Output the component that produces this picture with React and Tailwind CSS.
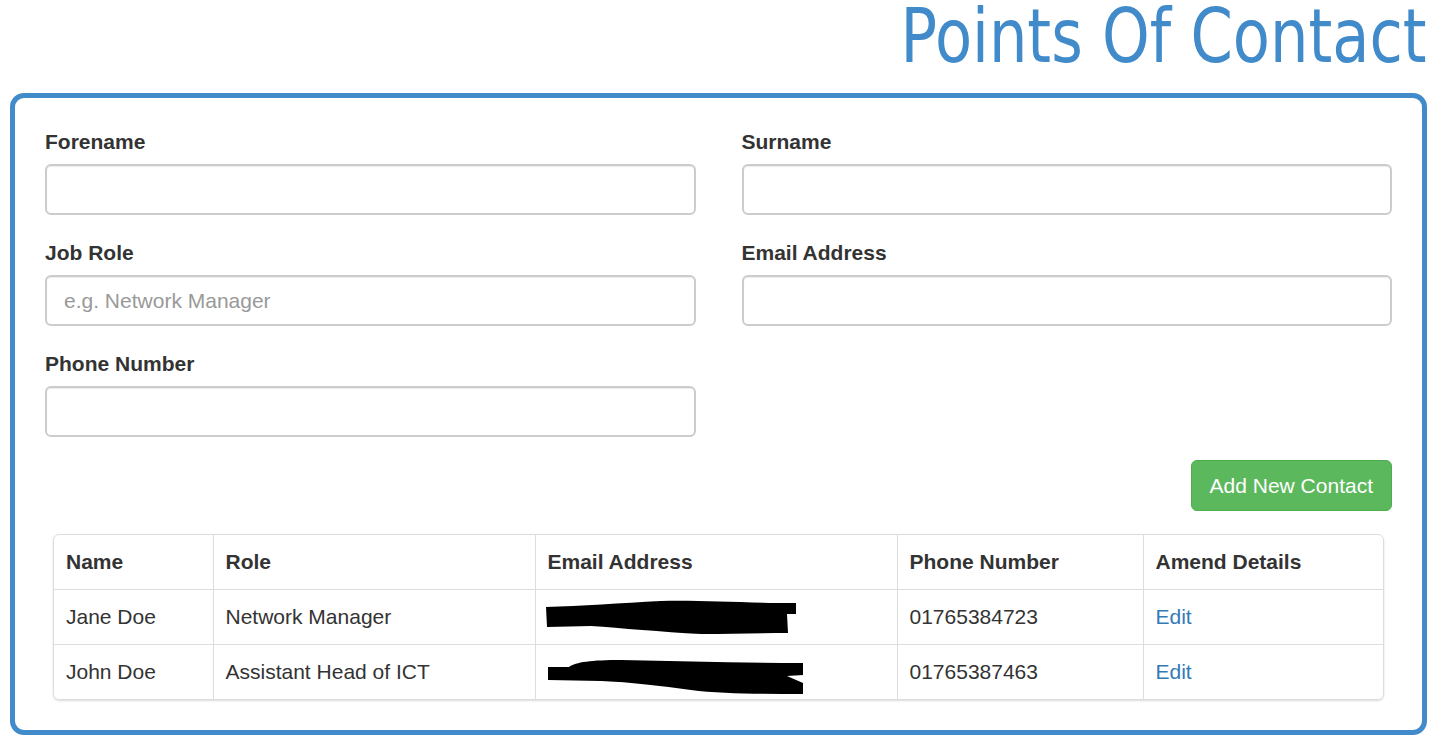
import React from "react";

const fields = [
	{ label: "Forename", placeholder: "" },
	{ label: "Surname", placeholder: "" },
	{ label: "Job Role", placeholder: "e.g. Network Manager" },
	{ label: "Email Address", placeholder: "" },
	{ label: "Phone Number", placeholder: "" },
];

const contacts = [
	{ name: "Jane Doe", role: "Network Manager", phone: "01765384723", scribble: 1 },
	{ name: "John Doe", role: "Assistant Head of ICT", phone: "01765387463", scribble: 2 },
];

// redacted email, drawn as a marker scribble
const Scribble = ({ variant }) => {
	if (variant === 1) {
		return (
			<svg width="270" height="45" viewBox="540 595 270 45" className="block -ml-[7px] -mt-[7px] -mb-[8px]">
				<path
					d="M545,607 C580,606 620,603 660,601 C700,600 740,603 795,603 L795,614 L786,614 L787,633 C760,633 730,634 700,634 C660,632 620,628 590,626 L546,627 Z"
					fill="#000"
				/>
			</svg>
		);
	}
	return (
		<svg width="270" height="48" viewBox="540 652 270 48" className="block -ml-[7px] -mt-[5px] -mb-[13px]">
			<path
				d="M547,667 L568,667 C575,662 590,660 620,660 C680,661 740,663 802,663 L802,675 L786,676 L802,683 L802,694 C760,694 720,694 690,690 C660,686 630,682 600,681 L547,680 Z"
				fill="#000"
			/>
		</svg>
	);
};

const Field = ({ label, placeholder }) => (
	<div className="mb-[23px]">
		<label className="block font-bold leading-[30px] mb-[7px] text-[#333]">{label}</label>
		<input
			type="text"
			placeholder={placeholder}
			className="block w-full h-[51px] px-[17px] border-2 border-[#ccc] rounded-[6px] shadow-[inset_0_1px_1px_rgba(0,0,0,0.075)] text-[#555] placeholder:text-[#999] outline-none"
		/>
	</div>
);

const App = () => {
	return (
		<div className="bg-white min-h-[743px] text-[21px] text-[#333]" style={{ fontFamily: '"Liberation Sans", Arial, sans-serif' }}>
			{/* Header */}
			<div className="flex justify-end pr-[5px] h-[93px]">
				<h1
					className="text-[74px] leading-[72px] h-[72px] font-normal text-[#428bca] whitespace-nowrap origin-right scale-x-82 scale-y-100"
					style={{ fontFamily: '"DejaVu Sans", sans-serif' }}
				>
					Points Of Contact
				</h1>
			</div>

			{/* Panel */}
			<div className="ml-[10px] w-[1417px] border-[5px] border-[#428bca] rounded-[14px] px-[30px] pt-[29px] pb-[30px]">
				<div className="grid grid-cols-2 gap-x-[46px]">
					{fields.map((f) => (
						<Field key={f.label} label={f.label} placeholder={f.placeholder} />
					))}
				</div>

				<div className="flex justify-end">
					<button className="h-[51px] px-[18px] bg-[#5cb85c] border border-[#4cae4c] rounded-[6px] text-white leading-[30px]">
						Add New Contact
					</button>
				</div>

				<div className="mt-[23px] mx-[8px] border border-[#ddd] rounded-[6px] shadow-[0_1px_2px_rgba(0,0,0,0.15)] overflow-hidden">
					<table className="w-full table-fixed border-collapse">
						<thead>
							<tr>
								<th className="w-[159px] text-left font-bold px-[12px] py-[12px] leading-[30px]">Name</th>
								<th className="w-[322px] text-left font-bold px-[12px] py-[12px] leading-[30px] border-l border-[#ddd]">Role</th>
								<th className="w-[362px] text-left font-bold px-[12px] py-[12px] leading-[30px] border-l border-[#ddd]">Email Address</th>
								<th className="w-[246px] text-left font-bold px-[12px] py-[12px] leading-[30px] border-l border-[#ddd]">Phone Number</th>
								<th className="text-left font-bold px-[12px] py-[12px] leading-[30px] border-l border-[#ddd]">Amend Details</th>
							</tr>
						</thead>
						<tbody>
							{contacts.map((c) => (
								<tr key={c.name} className="border-t border-[#ddd]">
									<td className="px-[12px] py-[12px] leading-[30px]">{c.name}</td>
									<td className="px-[12px] py-[12px] leading-[30px] border-l border-[#ddd]">{c.role}</td>
									<td className="px-[12px] py-[12px] leading-[30px] border-l border-[#ddd] overflow-visible">
										<Scribble variant={c.scribble} />
									</td>
									<td className="px-[12px] py-[12px] leading-[30px] border-l border-[#ddd]">{c.phone}</td>
									<td className="px-[12px] py-[12px] leading-[30px] border-l border-[#ddd]">
										<a href="#" className="text-[#337ab7]">Edit</a>
									</td>
								</tr>
							))}
						</tbody>
					</table>
				</div>
			</div>
		</div>
	);
};

export default App;
